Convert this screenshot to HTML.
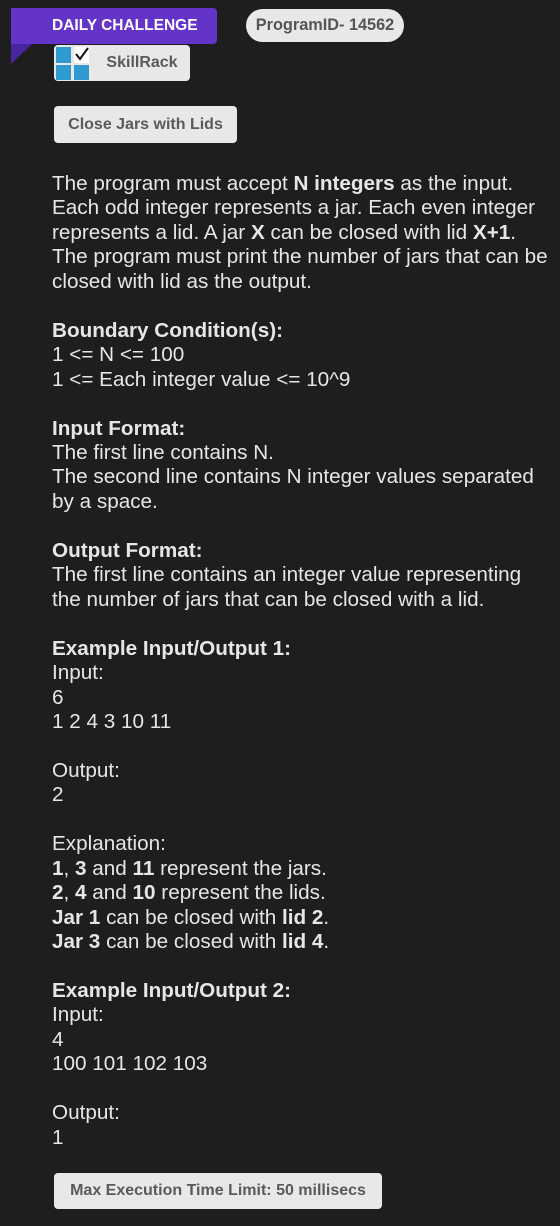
<!DOCTYPE html>
<html><head><meta charset="utf-8"><style>
body{margin:0;width:560px;height:1226px;background:#1e1e1e;font-family:"Liberation Sans",sans-serif;position:relative;overflow:hidden}
.tag{position:absolute;left:11px;top:8px;width:206px;height:36px;background:#6433c8;border-radius:0 4px 4px 0;color:#fff;font-weight:bold;font-size:15.5px;line-height:36px;text-indent:41px}
.fold{position:absolute;left:11px;top:44px;width:0;height:0;border-top:20px solid #4a25a0;border-left:21px solid transparent;transform:scaleX(-1)}
.pill{position:absolute;left:246px;top:9px;width:158px;height:33px;border-radius:17px;background:#e8e8e8;color:#555;font-weight:bold;font-size:16.3px;line-height:33px;text-align:center}
.btn{position:absolute;background:#e8e8e8;border-radius:4px;color:#5a5a5a;font-weight:bold;font-size:16px;text-align:center}
.txt{position:absolute;left:52px;top:172px;color:#e6e6e6;font-size:20.7px;line-height:24.45px;white-space:pre}
b{font-weight:bold}
</style></head><body>
<div class="tag">DAILY CHALLENGE</div>
<div class="fold"></div>
<div class="pill">ProgramID- 14562</div>
<div class="btn" style="left:54px;top:45px;width:136px;height:36px;line-height:36px;text-indent:40px">SkillRack</div>
<svg style="position:absolute;left:55px;top:46px" width="36" height="35" viewBox="0 0 36 35">
<rect x="1" y="1" width="15" height="16" fill="#2e9ad0"/><rect x="19" y="1" width="15" height="16" fill="#fff"/>
<rect x="1" y="19" width="15" height="15" fill="#2e9ad0"/><rect x="19" y="19" width="15" height="15" fill="#2e9ad0"/>
<path d="M21 8 L25 13 L33 2" stroke="#111" stroke-width="2" fill="none"/></svg>
<div class="btn" style="left:54px;top:106px;width:183px;height:37px;line-height:37px">Close Jars with Lids</div>
<div class="txt">The program must accept <b>N integers</b> as the input.
Each odd integer represents a jar. Each even integer
represents a lid. A jar <b>X</b> can be closed with lid <b>X+1</b>.
The program must print the number of jars that can be
closed with lid as the output.

<b>Boundary Condition(s):</b>
1 &lt;= N &lt;= 100
1 &lt;= Each integer value &lt;= 10^9

<b>Input Format:</b>
The first line contains N.
The second line contains N integer values separated
by a space.

<b>Output Format:</b>
The first line contains an integer value representing
the number of jars that can be closed with a lid.

<b>Example Input/Output 1:</b>
Input:
6
1 2 4 3 10 11

Output:
2

Explanation:
<b>1</b>, <b>3</b> and <b>11</b> represent the jars.
<b>2</b>, <b>4</b> and <b>10</b> represent the lids.
<b>Jar 1</b> can be closed with <b>lid 2</b>.
<b>Jar 3</b> can be closed with <b>lid 4</b>.

<b>Example Input/Output 2:</b>
Input:
4
100 101 102 103

Output:
1</div>
<div class="btn" style="left:54px;top:1173px;width:328px;height:36px;line-height:36px">Max Execution Time Limit: 50 millisecs</div>
</body></html>
